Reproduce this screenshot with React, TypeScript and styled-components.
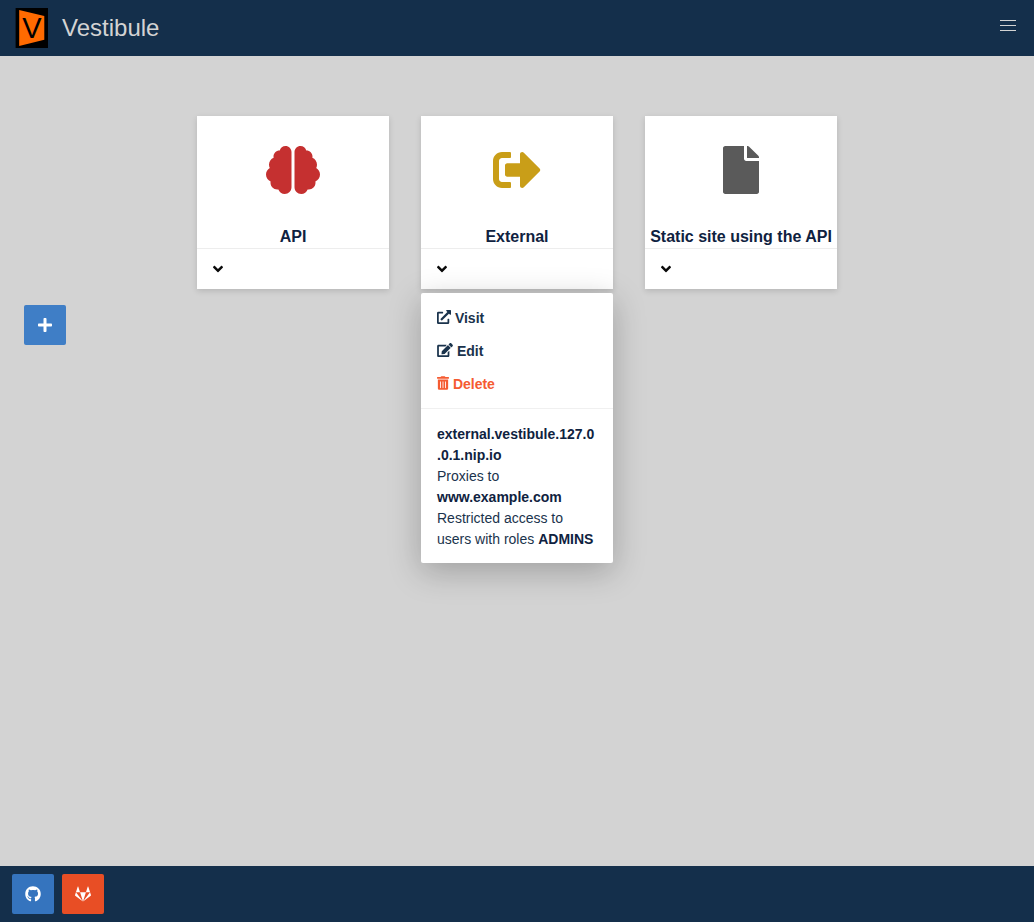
import React from "react";
import styled, { createGlobalStyle } from "styled-components";
import {
  FaAngleDown,
  FaBrain,
  FaEdit,
  FaExternalLinkAlt,
  FaFile,
  FaGithub,
  FaGitlab,
  FaPlus,
  FaSignOutAlt,
  FaTrashAlt,
} from "react-icons/fa";

const GlobalStyle = createGlobalStyle`
  *, *::before, *::after { box-sizing: border-box; }
  body {
    margin: 0;
    background: #d3d3d3;
    color: #1a334c;
    font: 16px/24px "Liberation Sans", Arial, sans-serif;
  }
  button { font: inherit; }
`;

const Page = styled.div`
  min-height: 100vh;
  display: flex;
  flex-direction: column;
`;

const Navbar = styled.header`
  display: flex;
  align-items: center;
  justify-content: space-between;
  height: 56px;
  background: #142f4b;
`;

const Brand = styled.a`
  display: flex;
  align-items: center;
  gap: 14px;
  padding: 8px 15px;
  color: #d3d3d3;
  font-size: 24px;
  text-decoration: none;
`;

const Burger = styled.button`
  display: flex;
  flex-direction: column;
  align-items: center;
  justify-content: center;
  gap: 4px;
  width: 52px;
  height: 50px;
  padding: 0;
  margin-bottom: 6px;
  border: 0;
  background: none;
`;

const BurgerLine = styled.span`
  width: 16px;
  height: 1px;
  background: #d3d3d3;
`;

const Main = styled.main`
  flex: 1;
  padding: 60px 24px;
`;

const Cards = styled.div`
  display: flex;
  flex-wrap: wrap;
  justify-content: center;
  gap: 32px;
  margin-bottom: 16px;
`;

const CardBox = styled.article`
  position: relative;
  width: 192px;
  background: #fff;
  box-shadow: 0 2px 6px rgba(10, 10, 10, 0.14);
`;

const CardIcon = styled.div<{ $color: string; $width: number }>`
  display: flex;
  align-items: center;
  justify-content: center;
  height: 108px;
  color: ${(p) => p.$color};
  font-size: 48px;

  svg { width: ${(p) => p.$width}px; }
`;

const CardTitle = styled.h2`
  margin: 0;
  padding-top: 2px;
  color: #0f2240;
  font-size: 16px;
  line-height: 22px;
  text-align: center;
  white-space: nowrap;
`;

const CardFooter = styled.div`
  display: flex;
  height: 41px;
  border-top: 1px solid #ededed;
`;

const Toggle = styled.button`
  display: flex;
  align-items: center;
  padding: 0 16px;
  border: 0;
  background: none;
  color: #0a0a0a;

  svg { width: 10px; }
`;

const Menu = styled.div`
  position: absolute;
  z-index: 2;
  top: 100%;
  left: 0;
  width: 100%;
  margin-top: 4px;
  padding: 8px 0;
  border-radius: 2px;
  background: #fff;
  box-shadow: 0 8px 32px rgba(10, 10, 10, 0.26);
  font-size: 14px;
  line-height: 21px;
`;

const MenuItem = styled.a<{ $danger?: boolean; $iconWidth: number }>`
  display: block;
  padding: 7px 16px 5px;
  color: ${(p) => (p.$danger ? "#f55b31" : "#1a334c")};
  font-weight: bold;
  text-decoration: none;

  svg {
    width: ${(p) => p.$iconWidth}px;
    vertical-align: -1px;
  }
`;

const Divider = styled.hr`
  height: 1px;
  margin: 8px 0;
  border: 0;
  background: #f0f0f0;
`;

const Details = styled.div`
  padding: 7px 16px 5px;
  overflow-wrap: anywhere;

  strong { color: #0f2240; }
`;

const buttonBase = `
  display: inline-flex;
  align-items: center;
  justify-content: center;
  width: 42px;
  height: 40px;
  padding: 0;
  border: 0;
  border-radius: 2px;
`;

const AddButton = styled.button`
  ${buttonBase}
  background: #3f7ec6;
  color: #fff;
`;

const Footer = styled.footer`
  display: flex;
  gap: 8px;
  padding: 8px 12px;
  background: #142f4b;
`;

const SocialLink = styled.a<{ $color: string }>`
  ${buttonBase}
  background: ${(p) => p.$color};
  color: #fff;
`;

function Logo() {
  return (
    <svg width="33" height="40" viewBox="0 0 33 40" aria-hidden="true">
      <rect x="0.600" width="32.400" height="40" fill="#000" />
      <path d="M4.200 2 L29.300 8 V31.800 L4.200 38 Z" fill="#ff6a00" />
      <text x="17" y="29.800" textAnchor="middle" fontSize="29" fill="#000">V</text>
    </svg>
  );
}

type CardProps = {
  title: string;
  color: string;
  icon: React.ReactNode;
  iconWidth?: number;
  children?: React.ReactNode;
};

function Card({ title, color, icon, iconWidth = 48, children }: CardProps) {
  return (
    <CardBox>
      <CardIcon $color={color} $width={iconWidth}>{icon}</CardIcon>
      <CardTitle>{title}</CardTitle>
      <CardFooter>
        <Toggle aria-label={`${title} options`} aria-expanded={Boolean(children)}>
          <FaAngleDown />
        </Toggle>
      </CardFooter>
      {children}
    </CardBox>
  );
}

export default function App() {
  return (
    <Page>
      <GlobalStyle />
      <Navbar>
        <Brand href="#">
          <Logo />
          Vestibule
        </Brand>
        <Burger aria-label="Menu">
          <BurgerLine />
          <BurgerLine />
          <BurgerLine />
        </Burger>
      </Navbar>
      <Main>
        <Cards>
          <Card title="API" color="#c53030" icon={<FaBrain />} iconWidth={54} />
          <Card title="External" color="#c99e18" icon={<FaSignOutAlt />}>
            <Menu>
              <MenuItem href="#visit" $iconWidth={14}><FaExternalLinkAlt /> Visit</MenuItem>
              <MenuItem href="#edit" $iconWidth={16}><FaEdit /> Edit</MenuItem>
              <MenuItem href="#delete" $iconWidth={12} $danger><FaTrashAlt /> Delete</MenuItem>
              <Divider />
              <Details>
                <strong>external.vestibule.127.0.0.1.nip.io</strong>
                <br />
                Proxies to <strong>www.example.com</strong>
                <br />
                Restricted access to users with roles <strong>ADMINS</strong>
              </Details>
            </Menu>
          </Card>
          <Card title="Static site using the API" color="#5a5a5a" icon={<FaFile />} />
        </Cards>
        <AddButton aria-label="Add"><FaPlus /></AddButton>
      </Main>
      <Footer>
        <SocialLink href="#github" aria-label="GitHub" $color="#3574be"><FaGithub /></SocialLink>
        <SocialLink href="#gitlab" aria-label="GitLab" $color="#e84e25"><FaGitlab /></SocialLink>
      </Footer>
    </Page>
  );
}
